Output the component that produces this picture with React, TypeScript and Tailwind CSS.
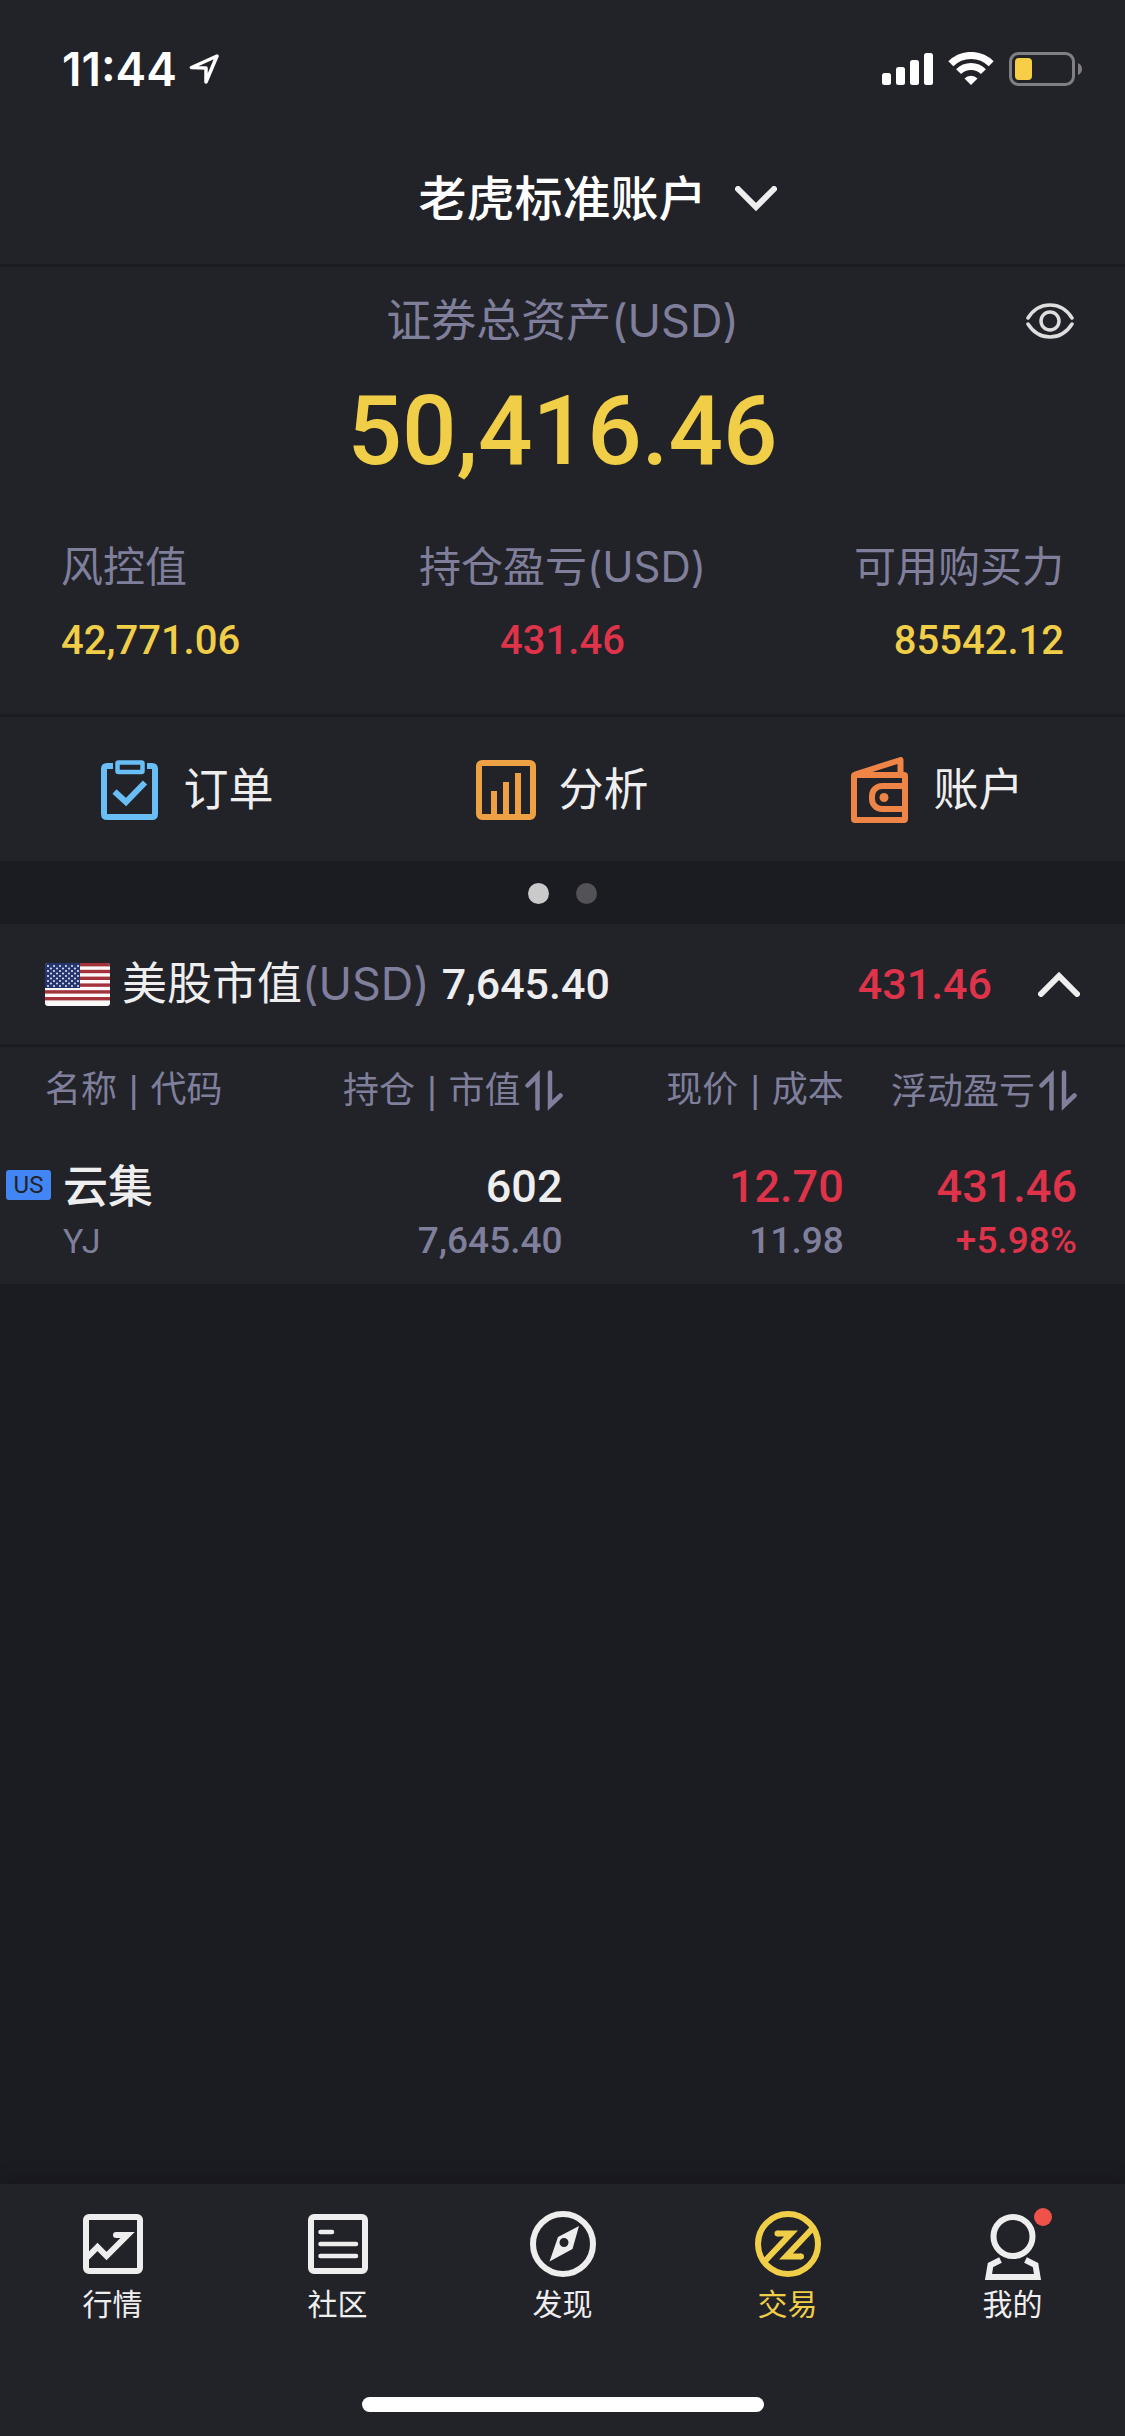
import type { ReactNode } from "react";

const LABEL = "font-['Inter','Noto_Sans_CJK_SC',sans-serif]";
const NUM = "font-['Roboto','Noto_Sans_CJK_SC',sans-serif]";

function LocationIcon() {
  return (
    <svg className="h-[30px] w-[30px]" viewBox="0 0 30 30" fill="none" stroke="currentColor" strokeWidth="3.5" strokeLinejoin="round" aria-hidden="true">
      <path d="M28 2 2.500 13.500 17 14 17 28Z" />
    </svg>
  );
}

function SignalIcon() {
  return (
    <svg className="h-[34px] w-[51px]" viewBox="0 0 51 34" fill="currentColor" aria-hidden="true">
      <rect x="0" y="21" width="9" height="12" rx="2.500" />
      <rect x="14" y="15" width="9" height="18" rx="2.500" />
      <rect x="28" y="8" width="9" height="25" rx="2.500" />
      <rect x="42" y="1" width="9" height="32" rx="2.500" />
    </svg>
  );
}

function WifiIcon() {
  return (
    <svg className="h-[34px] w-[46px]" viewBox="0 0 46 34" fill="none" stroke="currentColor" strokeWidth="7" aria-hidden="true">
      <path d="M2.800 11.800A28.500 28.500 0 0 1 43.200 11.800" />
      <path d="M10.600 19.600A17.500 17.500 0 0 1 35.400 19.600" />
      <path d="M23 33 16.500 26.500A9 9 0 0 1 29.500 26.500Z" fill="currentColor" stroke="none" />
    </svg>
  );
}

function BatteryIcon() {
  return (
    <svg className="h-[34px] w-[73px]" viewBox="0 0 73 34" aria-hidden="true">
      <rect x="1.500" y="1.500" width="63" height="31" rx="8" fill="none" stroke="#808084" strokeWidth="3" />
      <rect x="6" y="6" width="17" height="22" rx="4" fill="#f8ce46" />
      <path d="M69 11Q73 13 73 17T69 23Z" fill="#808084" />
    </svg>
  );
}

function Chevron({ up = false }: { up?: boolean }) {
  return (
    <svg className="h-[26px] w-[42px]" viewBox="0 0 42 26" fill="none" stroke="#eeeeef" strokeWidth="6" strokeLinecap="round" aria-hidden="true">
      <path d={up ? "M3 23 21 5 39 23" : "M3 3 21 21 39 3"} />
    </svg>
  );
}

function EyeIcon() {
  return (
    <svg className="h-9 w-12" viewBox="0 0 48 36" fill="none" stroke="#dededf" strokeWidth="3.500" strokeLinecap="round" aria-hidden="true">
      <path d="M2 15C7 7 15 2 24 2S41 7 46 15" />
      <path d="M2 21C7 29 15 34 24 34S41 29 46 21" />
      <circle cx="24" cy="18" r="9" />
    </svg>
  );
}

function OrdersIcon() {
  return (
    <svg className="h-[60px] w-[60px]" viewBox="0 0 60 60" fill="none" stroke="#68bef5" strokeWidth="6" aria-hidden="true">
      <path d="M12 6H6Q3 6 3 9V54Q3 57 6 57H51Q54 57 54 54V9Q54 6 51 6H46" />
      <rect x="16.500" y="2.500" width="25" height="9.500" rx="1" strokeWidth="4.500" />
      <path d="M13.500 31.500 25 42 44 22.500" />
    </svg>
  );
}

function AnalysisIcon() {
  return (
    <svg className="h-[60px] w-[60px]" viewBox="0 0 60 60" fill="none" stroke="#eea045" strokeWidth="6" aria-hidden="true">
      <rect x="3" y="3" width="54" height="54" rx="3" />
      <path d="M18 57V31M30 57V22M42 57V13" />
    </svg>
  );
}

function WalletIcon() {
  return (
    <svg className="h-[66px] w-[60px]" viewBox="0 0 60 66" fill="none" stroke="#ee8445" strokeWidth="6" strokeLinejoin="round" aria-hidden="true">
      <rect x="3" y="18" width="51" height="45" rx="1" />
      <path d="M4 17.500 49.500 3V18" />
      <path d="M54 29H31a10 10 0 0 0-10 10v3a10 10 0 0 0 10 10h23" />
      <circle cx="33" cy="40.500" r="4.500" fill="#ee8445" stroke="none" />
    </svg>
  );
}

function SortIcon() {
  return (
    <svg className="h-[41px] w-[38px]" viewBox="0 0 38 41" fill="none" stroke="currentColor" strokeWidth="4.500" strokeLinecap="round" strokeMiterlimit="10" aria-hidden="true">
      <path d="M2.500 15.500 12.500 5.500V38.500" />
      <path d="M25 2.500V35.500L35.500 25.500" />
    </svg>
  );
}

function UsFlag() {
  const stripes = Array.from({ length: 13 }, (_, i) => i);
  const stars = Array.from({ length: 9 }, (_, row) =>
    Array.from({ length: row % 2 ? 5 : 6 }, (_, col) => ({
      x: 3 + col * 6 + (row % 2 ? 3 : 0),
      y: 3 + row * 2.5,
    })),
  ).flat();
  return (
    <svg className="h-[43px] w-[65px] rounded-[3px]" viewBox="0 0 65 43" role="img" aria-label="US">
      <rect width="65" height="43" fill="#fbf9fa" />
      {stripes.filter((i) => i % 2 === 0 && i < 12).map((i) => (
        <rect key={i} y={i * 3.4} width="65" height="3.400" fill="#a3323b" />
      ))}
      <rect width="35" height="25" fill="#25356e" />
      {stars.map((s) => (
        <circle key={`${s.x}-${s.y}`} cx={s.x} cy={s.y} r="1" fill="#e8eaf2" />
      ))}
    </svg>
  );
}

function TabIcon({ children }: { children: ReactNode }) {
  return (
    <svg className="h-[66px] w-[66px] overflow-visible" viewBox="0 0 66 66" fill="none" stroke="currentColor" strokeWidth="6" strokeMiterlimit="10" aria-hidden="true">
      {children}
    </svg>
  );
}

function Pair({ first, second }: { first: string; second: string }) {
  return (
    <span>
      {first}
      <span className="mx-0.5 font-['Liberation_Sans',sans-serif]"> | </span>
      {second}
    </span>
  );
}

const stats = [
  { label: "风控值", value: "42,771.06", align: "text-left", color: "text-[#f0ce48]" },
  { label: "持仓盈亏(USD)", value: "431.46", align: "text-center", color: "text-[#de3349]" },
  { label: "可用购买力", value: "85542.12", align: "text-right", color: "text-[#f0ce48]" },
];

const actions = [
  { label: "订单", icon: <OrdersIcon /> },
  { label: "分析", icon: <AnalysisIcon /> },
  { label: "账户", icon: <WalletIcon /> },
];

const tabs = [
  {
    label: "行情",
    icon: (
      <TabIcon>
        <rect x="6" y="6" width="54" height="54" rx="3" />
        <path d="M7 46.500 17.500 36 26.500 45 47.500 24H36" />
        <circle cx="36" cy="24" r="3" fill="currentColor" stroke="none" />
      </TabIcon>
    ),
  },
  {
    label: "社区",
    icon: (
      <TabIcon>
        <rect x="6" y="6" width="54" height="54" rx="3" />
        <path d="M15.500 21H27M15.500 33H51M15.500 45H51" strokeWidth="4.500" strokeLinecap="round" />
      </TabIcon>
    ),
  },
  {
    label: "发现",
    icon: (
      <TabIcon>
        <circle cx="33" cy="33" r="30" />
        <path d="M49 15 28 26 19.500 50.500 42.500 38ZM34 27a4.500 4.500 0 1 1 0 9a4.500 4.500 0 0 1 0-9Z" fill="currentColor" fillRule="evenodd" stroke="none" />
      </TabIcon>
    ),
  },
  {
    label: "交易",
    active: true,
    icon: (
      <TabIcon>
        <circle cx="33" cy="33" r="30" />
        <path d="M22.500 22.500H36L10 50M57 18 31 45.500H46" />
        <circle cx="22.500" cy="22.500" r="3" fill="currentColor" stroke="none" />
        <circle cx="46" cy="45.500" r="3" fill="currentColor" stroke="none" />
      </TabIcon>
    ),
  },
  {
    label: "我的",
    badge: true,
    icon: (
      <TabIcon>
        <circle cx="33" cy="25.500" r="19.500" />
        <path d="M20.500 49 10.500 54 8.500 66H57.500L55.500 54 45.500 49" />
      </TabIcon>
    ),
  },
];

export default function App() {
  return (
    <div className={`flex min-h-screen flex-col bg-[#1b1b22] text-[#eeeeef] ${LABEL}`}>
      <header className="border-b-[3px] border-[#1b1b22] bg-[#222229]">
        <div className="flex h-[138px] items-center justify-between pr-[43px] pl-[62px] text-white">
          <div className="flex items-center gap-3">
            <span className="text-[46px] leading-[56px] font-semibold">11:44</span>
            <LocationIcon />
          </div>
          <div className="flex items-center gap-[15px]">
            <SignalIcon />
            <WifiIcon />
            <BatteryIcon />
          </div>
        </div>
        <h1>
          <button type="button" className="grid h-[126px] w-full grid-cols-[1fr_auto_1fr] items-center gap-7 pb-1">
            <span className="col-start-2 text-[48px] leading-[64px] font-medium text-white">老虎标准账户</span>
            <Chevron />
          </button>
        </h1>
      </header>

      <section className="border-b-[3px] border-[#1b1b22] bg-[#222229] pt-[22px] pb-[49px]">
        <div className="grid grid-cols-[1fr_auto_1fr] items-center px-[51px]">
          <h2 className="col-start-2 text-[45px] leading-[64px] font-normal text-[#7f7f9b]">证券总资产(USD)</h2>
          <button type="button" aria-label="显示或隐藏资产" className="justify-self-end">
            <EyeIcon />
          </button>
        </div>
        <p className={`mt-7 text-center text-[96px] leading-[100px] font-medium text-[#f0ce48] ${NUM}`}>50,416.46</p>
        <dl className="mt-[62px] grid grid-cols-[1fr_auto_1fr] px-[61px]">
          {stats.map((s) => (
            <div key={s.label} className={`flex flex-col gap-[26px] ${s.align}`}>
              <dt className="text-[42px] leading-[48px] text-[#7f7f9b]">{s.label}</dt>
              <dd className={`text-[40px] leading-[48px] font-medium ${NUM} ${s.color}`}>{s.value}</dd>
            </div>
          ))}
        </dl>
      </section>

      <nav className="grid h-36 grid-cols-3 bg-[#222229]" aria-label="快捷入口">
        {actions.map((a) => (
          <button key={a.label} type="button" className="flex items-center justify-center gap-[22px] pt-0.5 text-[45px] leading-[64px]">
            {a.icon}
            {a.label}
          </button>
        ))}
      </nav>

      <div className="flex h-[63px] items-center justify-center gap-[27px] pt-0.5">
        <button type="button" aria-label="第1页" className="h-[21px] w-[21px] rounded-full bg-[#cacacb]" />
        <button type="button" aria-label="第2页" className="h-[21px] w-[21px] rounded-full bg-[#525257]" />
      </div>

      <section className="bg-[#222229]">
        <button type="button" className="flex h-[123px] w-full items-center border-b-[3px] border-[#1b1b22] px-[45px]" aria-expanded="true">
          <UsFlag />
          <span className="ml-3 text-[45px] leading-[64px]">
            美股市值<span className="text-[#7f7f9b]">(USD)</span>
          </span>
          <span className={`ml-3 text-[43px] leading-[64px] font-medium ${NUM}`}>7,645.40</span>
          <span className={`mr-[46px] ml-auto text-[43px] leading-[64px] font-medium text-[#de3349] ${NUM}`}>431.46</span>
          <Chevron up />
        </button>

        <table className="w-full table-fixed text-right">
          <thead>
            <tr className="h-[84px] text-[36px] leading-[48px] whitespace-nowrap text-[#7f7f9b]">
              <th scope="col" className="pl-[45px] text-left font-normal">
                <Pair first="名称" second="代码" />
              </th>
              <th scope="col" className="font-normal">
                <button type="button" className="inline-flex items-center gap-1 align-middle">
                  <Pair first="持仓" second="市值" />
                  <SortIcon />
                </button>
              </th>
              <th scope="col" className="font-normal">
                <Pair first="现价" second="成本" />
              </th>
              <th scope="col" className="pr-12 font-normal">
                <button type="button" className="inline-flex items-center gap-1 align-middle">
                  浮动盈亏
                  <SortIcon />
                </button>
              </th>
            </tr>
          </thead>
          <tbody>
            <tr className="align-top">
              <td className="pt-7 pb-[17px] pl-1.5 text-left">
                <div className="flex items-start gap-3">
                  <span className={`mt-[11px] flex h-[30px] w-[45px] items-center justify-center rounded-[3px] bg-[#4285f4] text-[24px] text-[#222229] ${NUM}`}>US</span>
                  <div>
                    <div className="text-[45px] leading-[56px] font-medium">云集</div>
                    <div className={`text-[34px] leading-[52px] text-[#7f7f9b] ${NUM}`}>YJ</div>
                  </div>
                </div>
              </td>
              <td className={`pt-7 pb-[17px] font-medium ${NUM}`}>
                <div className="text-[45px] leading-[56px]">602</div>
                <div className="text-[37px] leading-[52px] text-[#7f7f9b]">7,645.40</div>
              </td>
              <td className={`pt-7 pb-[17px] font-medium ${NUM}`}>
                <div className="text-[45px] leading-[56px] text-[#de3349]">12.70</div>
                <div className="text-[37px] leading-[52px] text-[#7f7f9b]">11.98</div>
              </td>
              <td className={`pt-7 pr-12 pb-[17px] font-medium text-[#de3349] ${NUM}`}>
                <div className="text-[45px] leading-[56px]">431.46</div>
                <div className="text-[37px] leading-[52px]">+5.98%</div>
              </td>
            </tr>
          </tbody>
        </table>
      </section>

      <footer className="mt-auto bg-[#222229] pt-[27px] pb-6 shadow-[0_-6px_16px_rgba(0,0,0,0.15)]">
        <nav className="grid grid-cols-5" aria-label="主导航">
          {tabs.map((t) => (
            <a
              key={t.label}
              href="#"
              aria-current={t.active ? "page" : undefined}
              className={`flex flex-col items-center gap-[9px] text-[30px] leading-9 ${t.active ? "text-[#f0ce48]" : ""}`}
            >
              <span className="relative">
                {t.icon}
                {t.badge && <span className="absolute -top-[3px] -right-[6px] h-[18px] w-[18px] rounded-full bg-[#ee5249]" />}
              </span>
              {t.label}
            </a>
          ))}
        </nav>
        <div className="mx-auto mt-[75px] h-[15px] w-[402px] rounded-full bg-white" />
      </footer>
    </div>
  );
}
